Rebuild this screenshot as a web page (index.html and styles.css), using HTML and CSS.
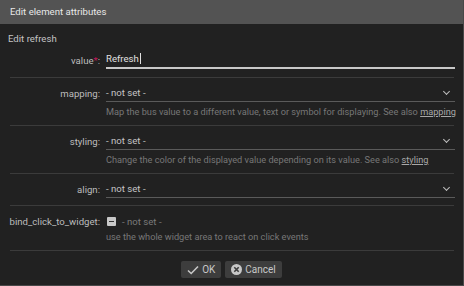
FILE: index.html
```html
<!DOCTYPE html>
<html lang="en">
  <head>
    <meta charset="UTF-8" />
    <title>Edit element attributes</title>
    <link rel="stylesheet" href="styles.css">
  </head>
  <body>
    <div class="dialog">
      <div class="dialog-title">Edit element attributes</div>
      <div class="dialog-body">
        <div class="heading">Edit refresh</div>

        <div class="field field-first">
          <div class="row">
            <label class="label">value<span class="req">*</span>:</label>
            <div class="input focused">Refresh<span class="caret"></span></div>
          </div>
        </div>

        <div class="field">
          <div class="row">
            <label class="label">mapping:</label>
            <div class="input select">- not set -<span class="chevron"></span></div>
          </div>
          <div class="desc">Map the bus value to a different value, text or symbol for displaying. See also <a href="#">mapping</a></div>
        </div>

        <div class="field">
          <div class="row">
            <label class="label">styling:</label>
            <div class="input select">- not set -<span class="chevron"></span></div>
          </div>
          <div class="desc">Change the color of the displayed value depending on its value. See also <a href="#">styling</a></div>
        </div>

        <div class="field">
          <div class="row">
            <label class="label">align:</label>
            <div class="input select">- not set -<span class="chevron"></span></div>
          </div>
        </div>

        <div class="field">
          <div class="row">
            <label class="label">bind_click_to_widget:</label>
            <div class="check">
              <span class="box"></span>
              <span class="unset">- not set -</span>
            </div>
          </div>
          <div class="desc desc-tight">use the whole widget area to react on click events</div>
        </div>

        <div class="buttons">
          <button class="btn">
            <svg width="12" height="10" viewBox="0 0 12 10"><path d="M1 5.5 L4.2 8.5 L11 1.5" fill="none" stroke="#c8c8c8" stroke-width="1.6"/></svg>
            OK
          </button>
          <button class="btn">
            <svg width="11" height="11" viewBox="0 0 11 11"><circle cx="5.5" cy="5.5" r="5.5" fill="#c8c8c8"/><path d="M3.3 3.3 L7.7 7.7 M7.7 3.3 L3.3 7.7" stroke="#3d3d3d" stroke-width="1.6"/></svg>
            Cancel
          </button>
        </div>
      </div>
    </div>
  </body>
</html>
```

FILE: styles.css
```css
body {
  margin: 0;
  background: #212121;
  font-family: Roboto, "Liberation Sans", sans-serif;
  font-size: 9.6px;
  color: #c4c4c4;
}

.dialog {
  width: 463px;
  height: 285px;
  border-right: 1px solid #484848;
  border-bottom: 1px solid #484848;
  background: #212121;
}

.dialog-title {
  height: 24px;
  line-height: 24px;
  padding-left: 10px;
  background: #535353;
  color: #e8e8e8;
}

.dialog-body {
  padding: 8px 8px 0 10px;
}

.heading {
  margin-left: -2px;
  line-height: 13px;
  color: #c4c4c4;
}

.field {
  padding: 7px 0;
  margin-right: 1px;
  border-bottom: 1px solid #3b3b3b;
}

.field-first {
  padding: 6px 0 8px;
}

.row {
  display: flex;
  align-items: center;
}

.label {
  flex: 0 0 98px;
  box-sizing: border-box;
  margin-left: -2px;
  padding-right: 6px;
  text-align: right;
  white-space: nowrap;
  color: #bdbdbd;
}

.req {
  color: #c2185b;
}

.input {
  flex: 1;
  position: relative;
  height: 16px;
  line-height: 16px;
  margin-right: -1px;
  border-bottom: 1px solid #5a5a5a;
  color: #c4c4c4;
}

.input.focused {
  border-bottom: 2px solid #c8c8c8;
  color: #e0e0e0;
}

.caret {
  display: inline-block;
  width: 1px;
  height: 11px;
  margin-left: 1px;
  vertical-align: -2px;
  background: #e0e0e0;
}

.chevron {
  position: absolute;
  right: 6px;
  top: 4px;
  width: 4px;
  height: 4px;
  border-right: 1.5px solid #bdbdbd;
  border-bottom: 1.5px solid #bdbdbd;
  transform: rotate(45deg);
}

.desc {
  margin: 3px 0 0 96px;
  line-height: 13px;
  font-size: 9.2px;
  color: #777;
  white-space: nowrap;
}

.desc-tight {
  margin-top: 1px;
}

.desc a {
  color: #a8a8a8;
  text-decoration: underline;
}

.check {
  display: flex;
  align-items: center;
  height: 16px;
}

.box {
  position: relative;
  width: 9px;
  height: 9px;
  margin-left: 1px;
  margin-right: 6px;
  border-radius: 1px;
  background: #c8c8c8;
}

.box::after {
  content: "";
  position: absolute;
  left: 2px;
  top: 4px;
  width: 5px;
  height: 1.5px;
  background: #333;
}

.unset {
  color: #7a7a7a;
}

.buttons {
  display: flex;
  justify-content: center;
  gap: 4px;
  margin: 10px 0 0 -2px;
}

.btn {
  display: flex;
  align-items: center;
  gap: 3px;
  height: 17px;
  padding: 0 6px;
  border: none;
  border-radius: 2px;
  background: #3d3d3d;
  color: #c8c8c8;
  font-family: inherit;
  font-size: 10px;
}
```
